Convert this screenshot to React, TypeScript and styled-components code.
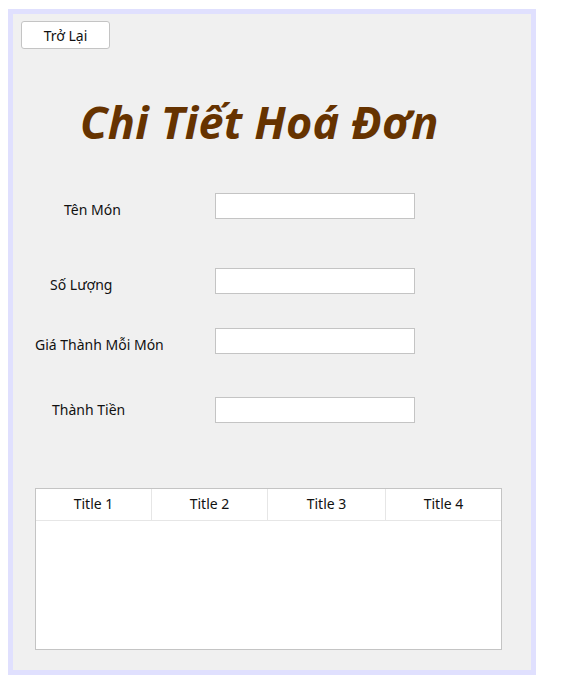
import React from "react";
import styled, { createGlobalStyle } from "styled-components";

const GlobalStyle = createGlobalStyle`
  body {
    margin: 0;
    background: #ffffff;
    font-family: "Noto Sans", "Open Sans", sans-serif;
  }
`;

const fields = [
  { label: "Tên Món", indent: 51, top: 41, shift: 3 },
  { label: "Số Lượng", indent: 37, top: 49, shift: 3 },
  { label: "Giá Thành Mỗi Món", indent: 22, top: 34, shift: 3 },
  { label: "Thành Tiền", indent: 39, top: 43, shift: -1 },
];

const columns = ["Title 1", "Title 2", "Title 3", "Title 4"];

const App = () => {
  return (
    <>
      <GlobalStyle />
      <Page>
        <Frame>
          <Panel>
            <BackButton>Trở Lại</BackButton>
            <Heading>Chi Tiết Hoá Đơn</Heading>
            {fields.map((f) => (
              <FieldRow key={f.label} top={f.top}>
                <FieldLabel indent={f.indent} shift={f.shift}>
                  {f.label}
                </FieldLabel>
                <TextBox />
              </FieldRow>
            ))}
            <Table>
              <HeaderRow>
                {columns.map((c) => (
                  <HeaderCell key={c}>{c}</HeaderCell>
                ))}
              </HeaderRow>
            </Table>
          </Panel>
        </Frame>
      </Page>
    </>
  );
};

const Page = styled.div`
  padding: 9px 0 0 8px;
`;

const Frame = styled.div`
  width: 528px;
  height: 666px;
  box-sizing: border-box;
  border: 5px solid #e0e0fe;
`;

const Panel = styled.div`
  height: 100%;
  background: #f0f0f0;
  display: flex;
  flex-direction: column;
  align-items: flex-start;
  padding: 7px 0 0 8px;
  box-sizing: border-box;
`;

const BackButton = styled.button`
  width: 89px;
  height: 28px;
  flex-shrink: 0;
  box-sizing: border-box;
  background: #ffffff;
  border: 1px solid #c4c4c4;
  border-radius: 3px;
  font-family: "Noto Sans", sans-serif;
  font-size: 14px;
  color: #111;
  padding: 0;
  cursor: pointer;
`;

const Heading = styled.h1`
  margin: 43px 0 0 59px;
  font-family: "Noto Sans", "Open Sans", sans-serif;
  font-style: italic;
  font-weight: 700;
  font-size: 45px;
  line-height: 60px;
  color: #663300;
  letter-spacing: 0.2px;
  white-space: nowrap;
`;

const FieldRow = styled.div<{ top: number }>`
  display: flex;
  align-items: center;
  margin-top: ${(p) => p.top}px;
  margin-left: -8px;
`;

const FieldLabel = styled.span<{ indent: number; shift: number }>`
  width: 202px;
  box-sizing: border-box;
  padding-left: ${(p) => p.indent}px;
  transform: translateY(${(p) => p.shift}px);
  font-size: 14px;
  color: #111;
`;

const TextBox = styled.input`
  width: 200px;
  height: 26px;
  box-sizing: border-box;
  margin: 0;
  border: 1px solid #c4c4c4;
  background: #ffffff;
  outline: none;
`;

const Table = styled.div`
  margin-top: 65px;
  margin-left: 14px;
  width: 467px;
  height: 162px;
  flex-shrink: 0;
  box-sizing: border-box;
  border: 1px solid #c4c4c4;
  background: #ffffff;
`;

const HeaderRow = styled.div`
  display: grid;
  grid-template-columns: 116px 116px 118px 1fr;
  height: 31px;
  border-bottom: 1px solid #e6e6e6;
`;

const HeaderCell = styled.div`
  display: flex;
  align-items: center;
  justify-content: center;
  padding-bottom: 2px;
  font-size: 14px;
  color: #111;
  border-right: 1px solid #e6e6e6;
  &:last-child {
    border-right: 0;
  }
`;

export default App;
